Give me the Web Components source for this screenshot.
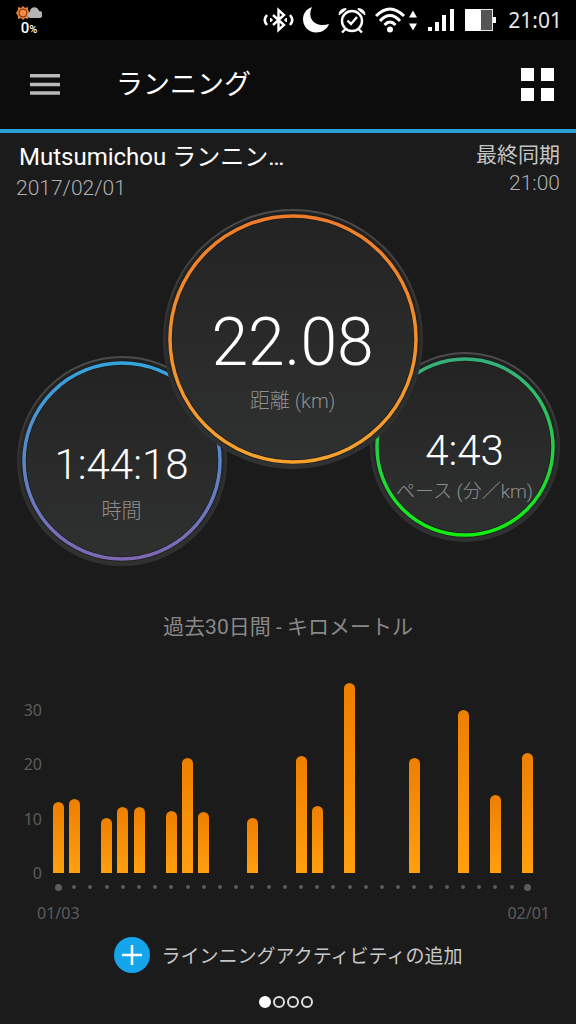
<!DOCTYPE html>
<html lang="ja">
<head>
<meta charset="utf-8">
<meta name="viewport" content="width=device-width, initial-scale=1">
<title>ランニング</title>
<style>
    body {
        margin: 0;
        min-height: 100vh;
        background: #1b1b1b;
        color: #fff;
        font-family: Roboto, "Noto Sans CJK JP", sans-serif;
    }
</style>
</head>
<body>
<running-app></running-app>

<script>
class StatusBar extends HTMLElement {
    constructor() {
        super();
        this.attachShadow({ mode: 'open' });
    }

    connectedCallback() {
        this.shadowRoot.innerHTML = `
            <style>
                :host {
                    display: flex;
                    align-items: center;
                    justify-content: space-between;
                    height: 40px;
                    padding: 0 14px 0 16px;
                    background: #000;
                }

                svg {
                    display: block;
                }

                .weather {
                    display: flex;
                    flex-direction: column;
                    align-items: center;
                    padding-top: 4px;
                    font-size: 15px;
                    line-height: 16px;
                    font-weight: 500;
                }

                small {
                    font-size: 11px;
                }

                .icons {
                    display: flex;
                    align-items: center;
                    gap: 9px;
                }

                .clock {
                    margin-left: 3px;
                    font: 21px/40px "Noto Sans", sans-serif;
                    color: #e8e8e8;
                }
            </style>
            <div class="weather">
                <svg width="26" height="14" viewBox="0 0 26 14">
                    <path d="M7 0l2 2 3-1 0 3 2 3-2 3 0 3-3-1-2 2-2-2-3 1 0-3-2-3 2-3 0-3 3 1z" fill="#e8843a"/>
                    <circle cx="7" cy="7" r="4" fill="#f58a3c" stroke="#6b3413"/>
                    <path d="M15 12a3 3 0 0 1-1-6 4.500 4.500 0 0 1 8-3 3 3 0 0 1 1 2 3.500 3.500 0 0 1 0 7z" fill="#b4b4b4"/>
                </svg>
                <span>0<small>%</small></span>
            </div>
            <div class="icons">
                <svg width="31" height="26" viewBox="0 0 31 26" fill="none" stroke="#fff" stroke-width="2.400">
                    <path d="M10 8L21 18l-5.500 5v-20L21 8 10 18"/>
                    <path d="M4 8q-4.500 5 0 10M27 8q4.500 5 0 10" stroke-width="2.600"/>
                    <path d="M7.500 11l2 2-2 2zM23.500 11l-2 2 2 2z" fill="#fff" stroke-width="1"/>
                </svg>
                <svg width="26" height="26" viewBox="0 0 26 26">
                    <path d="M9 0C3 2 0 7 0 12c0 8 6 13.500 13 13.500 6 0 11-3 13-8.500C14 21 3 13 9 0z" fill="#fff"/>
                </svg>
                <svg width="28" height="26" viewBox="0 0 28 26" fill="none" stroke="#fff" stroke-width="2.400">
                    <circle cx="14" cy="14" r="10"/>
                    <path d="M9.500 13.500l3.500 3.500 6-7"/>
                    <path d="M7.500 22L4 25.500M20.500 22l3.500 3.500"/>
                    <path d="M1 8q0-6 7-6.500L8 2.500zM27 8q0-6-7-6.500L20 2.500z" fill="#fff" stroke-width="1"/>
                </svg>
                <svg width="43" height="26" viewBox="0 0 43 26">
                    <g fill="none" stroke="#fff" stroke-width="3">
                        <path d="M1 9Q15-5 29 9"/>
                        <path d="M5 14Q15 3 25 14"/>
                        <path d="M9.500 18Q15 12 20.500 18"/>
                    </g>
                    <circle cx="15" cy="22.500" r="3" fill="#fff"/>
                    <path d="M34 10.500l4-7 4 7zM34 16.500l4 7 4-7z" fill="#fff"/>
                </svg>
                <svg width="29" height="24" viewBox="0 0 29 24" fill="#fff">
                    <path d="M1 19h4v4H1zM8 14h4v9H8zM15 7h4v16h-4zM23 1h4v22h-4z"/>
                </svg>
                <svg width="31" height="22" viewBox="0 0 31 22">
                    <rect x="0.500" y="0.500" width="27" height="21" fill="#555" stroke="#e6e6e6"/>
                    <path d="M0 0h16v22H0zM28 8h3v6h-3z" fill="#fff"/>
                </svg>
                <time class="clock">21:01</time>
            </div>
        `;
    }
}

class AppBar extends HTMLElement {
    constructor() {
        super();
        this.attachShadow({ mode: 'open' });
    }

    connectedCallback() {
        this.shadowRoot.innerHTML = `
            <style>
                :host {
                    display: flex;
                    align-items: center;
                    height: 89px;
                    padding: 0 22px 0 30px;
                    background: #0c0c0c;
                    border-bottom: 4px solid #2a9fd8;
                }

                h1 {
                    flex: 1;
                    margin: 0 0 0 56px;
                    font-size: 27px;
                    line-height: 40px;
                    font-weight: 400;
                }

                button {
                    padding: 0;
                    border: 0;
                    background: none;
                }

                svg {
                    display: block;
                }
            </style>
            <button aria-label="メニュー">
                <svg width="30" height="21" viewBox="0 0 30 21">
                    <path d="M0 0h30v3.500H0zM0 8.700h30v3.500H0zM0 17.300h30v3.500H0z" fill="#b9b9b9"/>
                </svg>
            </button>
            <h1><slot></slot></h1>
            <button aria-label="一覧">
                <svg width="33" height="33" viewBox="0 0 33 33">
                    <path d="M0 0h13v13H0zM20 0h13v13H20zM0 20h13v13H0zM20 20h13v13H20z" fill="#fff"/>
                </svg>
            </button>
        `;
    }
}

class ActivitySummary extends HTMLElement {
    constructor() {
        super();
        this.attachShadow({ mode: 'open' });
    }

    connectedCallback() {
        this.shadowRoot.innerHTML = `
            <style>
                :host {
                    display: flex;
                    justify-content: space-between;
                    padding: 8px 16px 0;
                }

                h2 {
                    margin: 0;
                    padding-left: 3px;
                    font-size: 24px;
                    line-height: 32px;
                    font-weight: 400;
                }

                .date, .sync {
                    font-size: 21px;
                    font-weight: 300;
                    color: #b0b0b0;
                }

                .date {
                    line-height: 30px;
                }

                .sync {
                    line-height: 28px;
                    text-align: right;
                }

                .label {
                    font-weight: 400;
                    color: #c4c4c4;
                }
            </style>
            <div>
                <h2><slot name="name"></slot></h2>
                <div class="date"><slot name="date"></slot></div>
            </div>
            <div class="sync">
                <div class="label">最終同期</div>
                <slot name="sync"></slot>
            </div>
        `;
    }
}

class StatDial extends HTMLElement {
    constructor() {
        super();
        this.attachShadow({ mode: 'open' });
    }

    connectedCallback() {
        const size = Number(this.getAttribute('size'));
        const c = size / 2;
        this.shadowRoot.innerHTML = `
            <style>
                :host {
                    display: grid;
                    flex: none;
                    width: ${size}px;
                    height: ${size}px;
                    text-align: center;
                }

                svg, .content {
                    grid-area: 1 / 1;
                }

                .content {
                    display: grid;
                    grid-template-rows: 1fr auto 1fr;
                    padding-top: 8px;
                    z-index: 1;
                    font-weight: 300;
                }

                .value {
                    grid-row: 2;
                    font-size: var(--value-size, 42px);
                    line-height: var(--value-line, 64px);
                }

                .label {
                    grid-row: 3;
                    font-size: var(--label-size, 20px);
                    line-height: 28px;
                    color: #8f8f8f;
                    white-space: nowrap;
                }
            </style>
            <svg width="${size}" height="${size}" viewBox="0 0 ${size} ${size}">
                <defs>
                    <linearGradient id="edge" x1="0" y1="0" x2="0" y2="1">
                        <stop offset="0" stop-color="#4c4c4c"/>
                        <stop offset="0.500" stop-color="#303030"/>
                        <stop offset="1" stop-color="#303131"/>
                    </linearGradient>
                    <linearGradient id="rim" x1="0" y1="0" x2="0" y2="1">
                        <stop offset="0" stop-color="#202020"/>
                        <stop offset="1" stop-color="#303131"/>
                    </linearGradient>
                    <linearGradient id="face" x1="0" y1="0" x2="0" y2="1">
                        <stop offset="0" stop-color="#232323"/>
                        <stop offset="1" stop-color="#2f3130"/>
                    </linearGradient>
                    <linearGradient id="ring" x1="0" y1="0" x2="0" y2="1">
                        <stop offset="0" stop-color="${this.getAttribute('from')}"/>
                        <stop offset="1" stop-color="${this.getAttribute('to')}"/>
                    </linearGradient>
                </defs>
                <circle cx="${c}" cy="${c}" r="${c - 1}" fill="url(#rim)" stroke="url(#edge)" stroke-width="2"/>
                <circle cx="${c}" cy="${c}" r="${c - 7}" fill="url(#face)" stroke="#1c1c1c" stroke-width="5"/>
                <circle cx="${c}" cy="${c}" r="${c - 7}" fill="none" stroke="url(#ring)" stroke-width="3.500"/>
            </svg>
            <div class="content">
                <div class="value"><slot></slot></div>
                <div class="label"><slot name="label"></slot></div>
            </div>
        `;
    }
}

class DistanceChart extends HTMLElement {
    constructor() {
        super();
        this.attachShadow({ mode: 'open' });
    }

    connectedCallback() {
        const max = 35;
        const values = this.getAttribute('values').split(',').map(Number);
        const bars = values.map(v => v ? `<i style="height: ${v / max * 100}%"></i>` : '<i></i>').join('');
        const dots = values.map(() => '<b></b>').join('');
        this.shadowRoot.innerHTML = `
            <style>
                :host {
                    display: block;
                    color: #5c5c5c;
                    font: 16px/20px "Noto Sans", sans-serif;
                }

                h3 {
                    margin: 0 0 41px;
                    font: 400 21px/30px Roboto, "Noto Sans CJK JP", sans-serif;
                    text-align: center;
                    color: #888;
                }

                .chart {
                    display: grid;
                    grid-template-columns: 42px 1fr;
                    column-gap: 8px;
                    padding-right: 40px;
                }

                .axis {
                    display: flex;
                    flex-direction: column;
                    justify-content: space-between;
                    height: 183px;
                    margin-top: 17px;
                    text-align: right;
                }

                .plot, .dots {
                    display: grid;
                    grid-template-columns: repeat(${values.length}, 1fr);
                    justify-items: center;
                }

                .plot {
                    height: 190px;
                    align-items: end;
                }

                .plot i {
                    width: 11px;
                    border-radius: 6px 6px 0 0;
                    background: linear-gradient(#ee7f00, #ff9f0f);
                }

                .dots {
                    height: 8px;
                    margin-top: 10px;
                    align-items: center;
                }

                .dots b {
                    width: 4px;
                    height: 4px;
                    border-radius: 50%;
                    background: #5c5c5c;
                }

                .dots b:first-child, .dots b:last-child {
                    width: 7px;
                    height: 7px;
                }

                .dates {
                    display: flex;
                    justify-content: space-between;
                    padding: 12px 26px 0 37px;
                }
            </style>
            <h3><slot></slot></h3>
            <div class="chart">
                <div class="axis"><span>30</span><span>20</span><span>10</span><span>0</span></div>
                <div>
                    <div class="plot">${bars}</div>
                    <div class="dots">${dots}</div>
                </div>
            </div>
            <div class="dates">
                <span>${this.getAttribute('start')}</span>
                <span>${this.getAttribute('end')}</span>
            </div>
        `;
    }
}

class AddButton extends HTMLElement {
    constructor() {
        super();
        this.attachShadow({ mode: 'open' });
    }

    connectedCallback() {
        this.shadowRoot.innerHTML = `
            <style>
                :host {
                    display: flex;
                    justify-content: center;
                }

                button {
                    display: flex;
                    align-items: center;
                    gap: 12px;
                    padding: 0;
                    border: 0;
                    background: none;
                    color: #c8c8c8;
                    font: 19px/36px "Noto Sans CJK JP", sans-serif;
                }
            </style>
            <button>
                <svg width="36" height="36" viewBox="0 0 36 36">
                    <circle cx="18" cy="18" r="18" fill="#14a5ea"/>
                    <path d="M18 8v20M8 18h20" stroke="#fff" stroke-width="2.500"/>
                </svg>
                <slot></slot>
            </button>
        `;
    }
}

class PageDots extends HTMLElement {
    constructor() {
        super();
        this.attachShadow({ mode: 'open' });
    }

    connectedCallback() {
        const count = Number(this.getAttribute('count'));
        let dots = '';
        for (let i = 1; i <= count; i++) {
            dots += `<button aria-label="${i}"></button>`;
        }
        this.shadowRoot.innerHTML = `
            <style>
                :host {
                    display: flex;
                    justify-content: center;
                    gap: 2px;
                }

                button {
                    box-sizing: border-box;
                    width: 12px;
                    height: 12px;
                    padding: 0;
                    border: 2px solid #ddd;
                    border-radius: 50%;
                    background: none;
                }

                button:first-of-type {
                    border-color: #fff;
                    background: #fff;
                }
            </style>
            ${dots}
        `;
    }
}

class RunningApp extends HTMLElement {
    constructor() {
        super();
        this.attachShadow({ mode: 'open' });
    }

    connectedCallback() {
        this.shadowRoot.innerHTML = `
            <style>
                :host {
                    display: block;
                }

                .dials {
                    display: flex;
                    justify-content: center;
                    margin: 6px 0 46px;
                }

                .time {
                    margin-top: 147px;
                }

                .distance {
                    z-index: 1;
                    margin: 0 -53px 0 -64px;
                    --value-size: 66px;
                    --value-line: 88px;
                }

                .pace {
                    margin-top: 143px;
                    --value-line: 54px;
                    --label-size: 19px;
                }

                add-button {
                    margin-top: 14px;
                }

                page-dots {
                    padding: 23px 0 16px;
                    margin-right: 4px;
                }
            </style>
            <status-bar></status-bar>
            <app-bar>ランニング</app-bar>
            <main>
                <activity-summary>
                    <span slot="name">Mutsumichou ランニン…</span>
                    <time slot="date">2017/02/01</time>
                    <time slot="sync">21:00</time>
                </activity-summary>
                <div class="dials">
                    <stat-dial class="time" size="210" from="#35a4dc" to="#7e68b4">
                        1:44:18<span slot="label">時間</span>
                    </stat-dial>
                    <stat-dial class="distance" size="260" from="#ee7d2b" to="#f5a22c">
                        22.08<span slot="label">距離 (km)</span>
                    </stat-dial>
                    <stat-dial class="pace" size="190" from="#37ae7c" to="#12ee12">
                        4:43<span slot="label">ペース (分／km)</span>
                    </stat-dial>
                </div>
                <distance-chart start="01/03" end="02/01"
                    values="13,13.7,0,10.1,12.2,12.2,0,11.4,21.2,11.2,0,0,10.1,0,0,21.5,12.3,0,35,0,0,0,21.1,0,0,30.1,0,14.3,0,22.08">過去30日間 - キロメートル</distance-chart>
                <add-button>ラインニングアクティビティの追加</add-button>
                <page-dots count="4"></page-dots>
            </main>
        `;
    }
}

customElements.define('status-bar', StatusBar);
customElements.define('app-bar', AppBar);
customElements.define('activity-summary', ActivitySummary);
customElements.define('stat-dial', StatDial);
customElements.define('distance-chart', DistanceChart);
customElements.define('add-button', AddButton);
customElements.define('page-dots', PageDots);
customElements.define('running-app', RunningApp);
</script>
</body>
</html>
